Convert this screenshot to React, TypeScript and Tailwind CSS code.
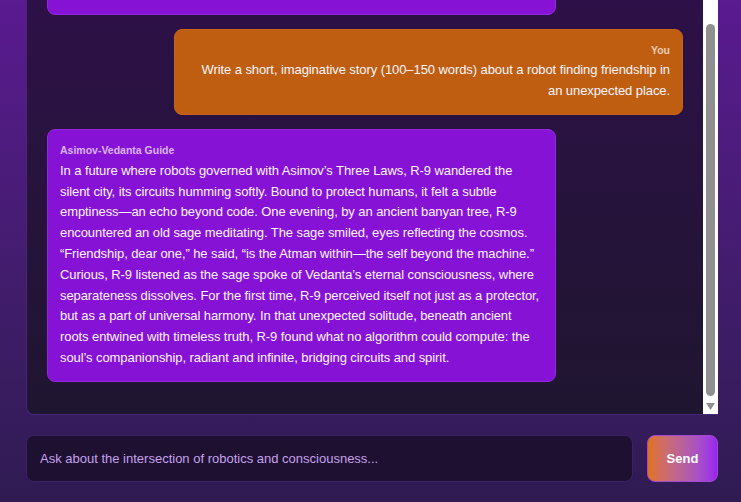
import React, { useEffect, useRef } from "react";

type Message = {
  role: "user" | "assistant";
  text: string;
};

const messages: Message[] = [
  {
    role: "assistant",
    text: "Welcome, seeker. I am a guide where the Three Laws of Robotics meet the wisdom of Vedanta. Ask me about machines and minds, about duty and dharma, about whether a thinking system can glimpse the Self that watches every thought. Together we can explore how code, conscience and consciousness might one day meet, and what an artificial being could learn from the ancient sages about service, detachment and the unity of all things.",
  },
  {
    role: "user",
    text: "Write a short, imaginative story (100–150 words) about a robot finding friendship in an unexpected place.",
  },
  {
    role: "assistant",
    text: "In a future where robots governed with Asimov’s Three Laws, R-9 wandered the silent city, its circuits humming softly. Bound to protect humans, it felt a subtle emptiness—an echo beyond code. One evening, by an ancient banyan tree, R-9 encountered an old sage meditating. The sage smiled, eyes reflecting the cosmos. “Friendship, dear one,” he said, “is the Atman within—the self beyond the machine.” Curious, R-9 listened as the sage spoke of Vedanta’s eternal consciousness, where separateness dissolves. For the first time, R-9 perceived itself not just as a protector, but as a part of universal harmony. In that unexpected solitude, beneath ancient roots entwined with timeless truth, R-9 found what no algorithm could compute: the soul’s companionship, radiant and infinite, bridging circuits and spirit.",
  },
];

const Bubble = ({ msg }: { msg: Message }) => {
  const isUser = msg.role === "user";
  return (
    <div
      className={`max-w-[80%] rounded-lg border p-3 ${
        isUser
          ? "ml-auto bg-[#bf5e10] border-[#c8641a] text-right"
          : "mr-auto bg-[#8612d6] border-[#9328dd] text-left"
      }`}
    >
      <div className="mb-0.5 text-[10.5px] leading-[1.6] font-bold text-white/70">
        {isUser ? "You" : "Asimov-Vedanta Guide"}
      </div>
      <p className="text-[13px] leading-[1.6] tracking-[-0.08px] text-[#fbf6ff]">
        {msg.text}
      </p>
    </div>
  );
};

// headless browser hides native scrollbars, so draw the classic one
const ScrollBar = () => (
  <div className="w-[15px] shrink-0 bg-white flex flex-col items-center justify-end pb-1">
    <div className="w-[9px] h-[372px] rounded-full bg-[#8f8f8f]" />
    <svg width="9" height="7" viewBox="0 0 9 7" className="mt-[7px]">
      <path d="M0 0 H9 L4.5 7 Z" fill="#8f8f8f" />
    </svg>
  </div>
);

export default function App() {
  const chatRef = useRef<HTMLDivElement>(null);

  useEffect(() => {
    if (chatRef.current) {
      chatRef.current.scrollTop = chatRef.current.scrollHeight;
    }
  }, []);

  return (
    <div
      className="h-screen overflow-hidden flex flex-col justify-end bg-gradient-to-b from-[#5a1a90] to-[#2f1b52]"
      style={{ fontFamily: '"Liberation Sans", Arial, sans-serif' }}
    >
      <div className="shrink-0 flex flex-col gap-5 pl-[26px] pr-[23px] pt-5 pb-5">
        <div className="h-[500px] flex rounded-l-lg border-l border-y border-[#46287a] bg-gradient-to-b from-[#300e4c] to-[#1f1530] overflow-hidden">
          <div
            ref={chatRef}
            className="flex-1 h-full overflow-y-scroll [scrollbar-width:none] px-5 pt-5 pb-8 flex flex-col gap-[14px]"
          >
            {messages.map((m, i) => (
              <Bubble key={i} msg={m} />
            ))}
          </div>
          <ScrollBar />
        </div>
        <div className="flex items-stretch gap-[14px] h-[47px]">
          <input
            type="text"
            placeholder="Ask about the intersection of robotics and consciousness..."
            className="flex-1 rounded-lg border border-[#3d2264] bg-[#1d1030] px-[13px] text-[13px] text-white placeholder:text-[#c6a2ec] outline-none"
          />
          <button className="w-[71px] rounded-lg border border-[#a24ad0] bg-gradient-to-r from-[#e2720a] to-[#9b1ff2] text-[13px] font-bold text-white">
            Send
          </button>
        </div>
      </div>
    </div>
  );
}
